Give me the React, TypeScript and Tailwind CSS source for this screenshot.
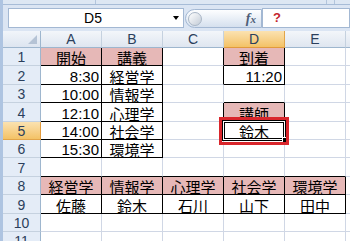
import React from 'react';

const COLS = ['A', 'B', 'C', 'D', 'E'];

type CellData = { text: string; kind: 'jp' | 'num'; pink?: boolean };

const CELLS: Record<string, CellData> = {
  A1: { text: '開始', kind: 'jp', pink: true },
  B1: { text: '講義', kind: 'jp', pink: true },
  D1: { text: '到着', kind: 'jp', pink: true },
  A2: { text: '8:30', kind: 'num' },
  B2: { text: '経営学', kind: 'jp' },
  D2: { text: '11:20', kind: 'num' },
  A3: { text: '10:00', kind: 'num' },
  B3: { text: '情報学', kind: 'jp' },
  A4: { text: '12:10', kind: 'num' },
  B4: { text: '心理学', kind: 'jp' },
  D4: { text: '講師', kind: 'jp', pink: true },
  A5: { text: '14:00', kind: 'num' },
  B5: { text: '社会学', kind: 'jp' },
  D5: { text: '鈴木', kind: 'jp' },
  A6: { text: '15:30', kind: 'num' },
  B6: { text: '環境学', kind: 'jp' },
  A8: { text: '経営学', kind: 'jp', pink: true },
  B8: { text: '情報学', kind: 'jp', pink: true },
  C8: { text: '心理学', kind: 'jp', pink: true },
  D8: { text: '社会学', kind: 'jp', pink: true },
  E8: { text: '環境学', kind: 'jp', pink: true },
  A9: { text: '佐藤', kind: 'jp' },
  B9: { text: '鈴木', kind: 'jp' },
  C9: { text: '石川', kind: 'jp' },
  D9: { text: '山下', kind: 'jp' },
  E9: { text: '田中', kind: 'jp' },
};

// cells that carry a black table border
const bordered = (r: number, c: number) => {
  if (c < 0 || c > 4) return false;
  if (r >= 1 && r <= 6 && c <= 1) return true;
  if ((r === 1 || r === 2 || r === 4 || r === 5) && c === 3) return true;
  if (r === 8 || r === 9) return true;
  return false;
};

const ROWS = [1, 2, 3, 4, 5, 6, 7, 8, 9, 10, 11];

const GridCell = ({ r, c }: { r: number; c: number }) => {
  const d = CELLS[COLS[c] + r];
  const isSelected = r === 5 && c === 3;
  const right =
    bordered(r, c) || bordered(r, c + 1) ? 'border-r-black' : 'border-r-[#d0d7e5]';
  const bottom =
    bordered(r, c) || bordered(r + 1, c) ? 'border-b-black' : 'border-b-[#d0d7e5]';

  return (
    <div
      className={`relative flex items-end border-r border-b ${right} ${bottom} ${
        d?.pink ? 'bg-[#e6b8b7]' : 'bg-white'
      } ${d?.kind === 'num' ? 'justify-end pr-[2px]' : 'justify-center'}`}
    >
      {d && (
        <span
          className={
            d.kind === 'num'
              ? "block font-['Liberation_Sans',sans-serif] text-[15px] leading-[14px] text-black"
              : "block font-['Noto_Sans_CJK_JP',sans-serif] text-[15px] leading-[15px] text-black"
          }
        >
          {d.text}
        </span>
      )}
      {isSelected && (
        <>
          {/* active cell frame */}
          <div className="absolute -inset-[2px] z-10 border border-black">
            <div className="absolute inset-0 border border-white">
              <div className="absolute inset-0 border border-black" />
            </div>
          </div>
          <div className="absolute -right-[4px] -bottom-[4px] z-20 size-[6px] border border-white bg-black" />
          {/* red annotation */}
          <div className="absolute -top-[5px] -right-[5px] -bottom-[6px] -left-[5px] z-20 border-[3px] border-[#d9262c]" />
        </>
      )}
    </div>
  );
};

const App = () => {
  return (
    <div className="flex h-[241px] w-[350px] overflow-hidden bg-white">
      {/* window frame */}
      <div className="w-[3px] shrink-0 bg-[#aec4e1]" />

      <div className="flex min-w-0 flex-1 flex-col">
        {/* ribbon bottom */}
        <div className="flex h-[5px] shrink-0 border-b border-[#a7bcd7] bg-[#dde7f3]">
          <div className="w-[93px] border-r border-[#b3c5dc]" />
          <div className="w-[231px] border-r border-[#b3c5dc]" />
          <div className="w-[8px] border-r border-[#b3c5dc]" />
          <div className="flex-1" />
        </div>

        {/* formula bar */}
        <div className="flex h-[26px] shrink-0 items-start bg-[#dbe5f3] pt-[3px] pl-[5px]">
          <div className="flex h-[20px] w-[176px] items-center border border-[#a3b8d3] bg-white">
            <span className="flex-1 pl-[4px] text-center font-['Liberation_Sans',sans-serif] text-[14px] text-black">
              D5
            </span>
            <span className="mr-[4px] h-0 w-0 border-x-[3.5px] border-t-[4px] border-x-transparent border-t-black" />
          </div>
          <div className="mt-[1px] ml-[1px] flex h-[19px] w-[77px] items-center rounded-l-full border border-[#a3b8d3] bg-linear-to-b from-[#fdfeff] to-[#d5e0ee] pr-[5px] pl-[2px]">
            <div className="size-[14px] rounded-full border border-[#a9b6c6] bg-linear-to-br from-white to-[#c3ccd7]" />
            <span className="ml-auto font-['Liberation_Serif',serif] text-[14px] font-bold italic leading-none text-[#4e5e78]">
              f<span className="text-[11px]">x</span>
            </span>
          </div>
          <div className="flex h-[20px] flex-1 items-center border border-[#a3b8d3] bg-white pl-[10px]">
            <span className="font-['Liberation_Sans',sans-serif] text-[13px] font-bold text-[#c3262e]">
              ?
            </span>
          </div>
        </div>

        {/* sheet */}
        <div className="grid grid-cols-[38px_61px_61px_61px_61px_61px_1fr] grid-rows-[17px_18px_19px_18px_19px_18px_18px_19px_18px_19px_18px_18px]">
          {/* corner */}
          <div className="relative border-r border-b border-r-[#9eb6ce] border-b-[#9eb6ce] bg-linear-to-b from-[#f1f5fa] to-[#dde5f0]">
            <svg
              className="absolute right-[3px] bottom-[3px]"
              width="9"
              height="9"
              viewBox="0 0 9 9"
            >
              <path d="M9 0 L9 9 L0 9 Z" fill="#b5c3d5" />
            </svg>
          </div>
          {COLS.map(col => (
            <div
              key={col}
              className={`flex items-end justify-center border-r border-b pb-[1px] font-['Liberation_Sans',sans-serif] text-[14px] leading-[14px] ${
                col === 'D'
                  ? 'border-r-[#e2a54a] border-b-[#e29a3c] bg-linear-to-b from-[#fbe2b0] to-[#f3c265] text-[#2b3f5c]'
                  : 'border-r-[#c5d1df] border-b-[#9eb6ce] bg-linear-to-b from-[#f3f6fa] to-[#dfe6f0] text-[#2b3f5c]'
              }`}
            >
              {col}
            </div>
          ))}
          <div className="border-b border-b-[#9eb6ce] bg-linear-to-b from-[#f3f6fa] to-[#dfe6f0]" />

          {ROWS.map(r => (
            <React.Fragment key={r}>
              <div
                className={`flex items-end justify-center border-r border-b pb-[1px] font-['Liberation_Sans',sans-serif] text-[14px] leading-[14px] text-[#2b3f5c] ${
                  r === 5
                    ? 'border-r-[#e29a3c] border-b-[#e2a54a] bg-linear-to-b from-[#fbe2b0] to-[#f3c265]'
                    : 'border-r-[#9eb6ce] border-b-[#c5d1df] bg-[#e4ecf7]'
                }`}
              >
                {r}
              </div>
              {COLS.map((_, c) => (
                <GridCell key={c} r={r} c={c} />
              ))}
              <div className="border-b border-b-[#d0d7e5] bg-white" />
            </React.Fragment>
          ))}
        </div>
      </div>
    </div>
  );
};

export default App;
